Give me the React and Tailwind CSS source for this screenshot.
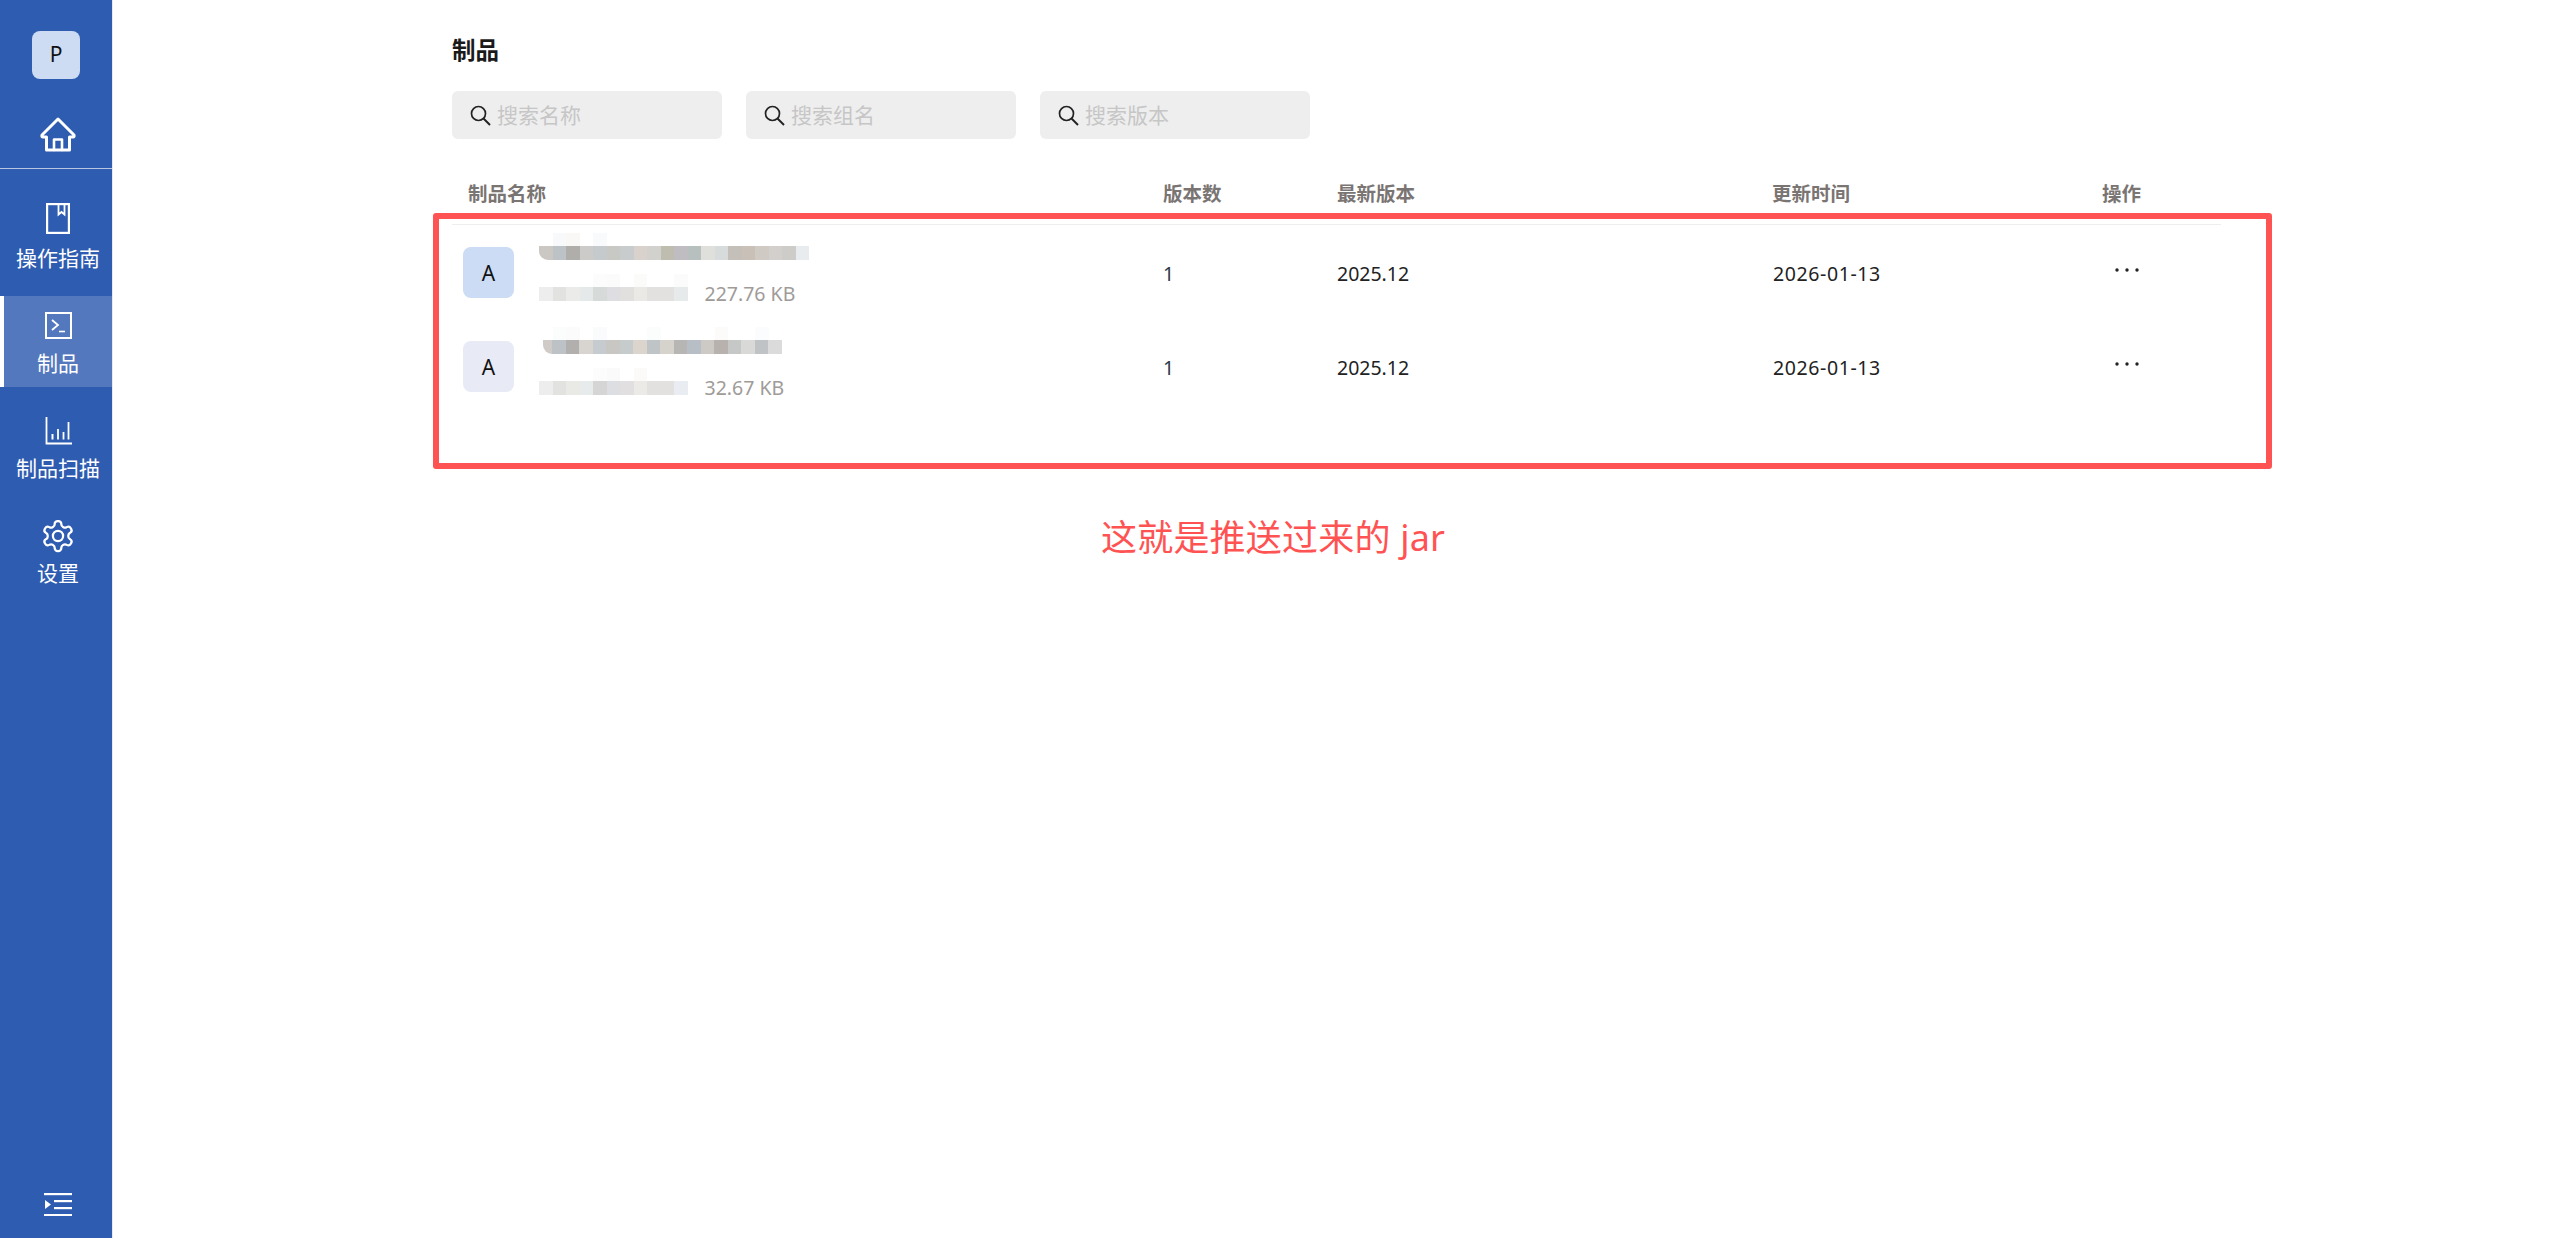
const font = "font-['Noto_Sans','Noto_Sans_CJK_SC',sans-serif]";

function Mosaic({ cells, first = "w-[13.5px]", rounded = "" }) {
  return (
    <div className={`flex h-[14px] ${rounded}`}>
      {cells.map((c, i) => (
        <div key={i} className={i === 0 ? `${first} h-full shrink-0 ${rounded ? "rounded-bl-[9px]" : ""}` : "w-[13.5px] h-full shrink-0"} style={{ backgroundColor: c }} />
      ))}
    </div>
  );
}

function Faint({ cells, className = "" }) {
  return (
    <div className={`flex h-[13px] ${className}`}>
      {cells.map((c, i) => (
        <div key={i} className="w-[13.5px] h-full shrink-0" style={{ backgroundColor: c }} />
      ))}
    </div>
  );
}

const W = "#ffffff";
const rows = [
  {
    avatar: "bg-[#cbdcf4]",
    size: "227.76 KB",
    indent: "",
    first: "w-[13.5px]",
    faint: [W, "#f8f9fb", "#faf8f6", W, "#f9fafc", W],
    name: ["#cbc7c3", "#bcc2c5", "#b0aeab", "#cdcbca", "#c5cacc", "#c8c8c5", "#c8cccd", "#d9d2cc", "#d2d1ce", "#bfbcb0", "#bfbdc2", "#b7bfbf", "#dfdfdc", "#d8dbdc", "#c4c0b9", "#c9c0b8", "#cfcbc4", "#d2cfcc", "#cdccc8", "#e8ecee"],
    faintSub: [W, W, W, W, "#fcfcfc", "#fbfbfb", W, "#fbfbf9", W, W, "#fbfbfb"],
    sub: ["#ededed", "#e2e2e1", "#ebebe9", "#e6e9ea", "#d6dbd9", "#dddde2", "#e2dfdf", "#eae9e5", "#e2e1e0", "#e2e1df", "#e7eaeb"],
  },
  {
    avatar: "bg-[#e8eaf6]",
    size: "32.67 KB",
    indent: "ml-[4px]",
    first: "w-[9px]",
    faint: [W, "#fbfcfc", "#fbfbfb", W, "#fafbfd", W, W, W, "#fbfdfd", W, W, W, W, "#fcfbf9", W, W, "#fbfcfe", W],
    name: ["#d0cbc6", "#bcc2c5", "#b2b0af", "#d8d4d0", "#c5cbce", "#c8c7c3", "#c6cbcc", "#dcd5ce", "#bfc5c7", "#d6d2cc", "#b8b5b5", "#b8bec5", "#cdc9c4", "#b7b2ae", "#c6c7c7", "#d9dad8", "#c0c3c5", "#dbdbdb"],
    faintSub: [W, W, W, W, "#fcfcfc", "#fafafa", W, "#fbfaf8", W, W, W],
    sub: ["#ededed", "#e2e2e1", "#e9e9e6", "#e8ebeb", "#d5d5d5", "#dddee2", "#e2dfe1", "#eceae6", "#e2e1e0", "#e2e1df", "#e9ecf0"],
  },
];

const Home = () => (
  <svg width="36" height="35" viewBox="0 0 36 35" fill="none" stroke="white" strokeWidth="3" strokeLinejoin="round" strokeLinecap="round">
    <path d="M18 2 L34 18 Q34.5 20 33 20 H29.5 V33 H6.5 V20 H3 Q1.5 20 2 18 Z" />
    <path d="M14 33 V22.5 H22 V33" strokeWidth="2.6" />
  </svg>
);
const Book = () => (
  <svg width="24" height="31" viewBox="0 0 24 31" fill="none" stroke="white" strokeWidth="2.2">
    <rect x="1.1" y="1.1" width="21.8" height="28.8" />
    <path d="M12.5 1 V11.5 L15.5 9 L18.5 11.5 V1" strokeWidth="1.8" />
  </svg>
);
const Terminal = () => (
  <svg width="27" height="27" viewBox="0 0 27 27" fill="none" stroke="white">
    <rect x="1" y="1" width="25" height="25" strokeWidth="2" />
    <path d="M7 8 L13 13 L7 18" strokeWidth="1.8" />
    <path d="M14 19.5 H20" strokeWidth="1.6" />
  </svg>
);
const Chart = () => (
  <svg width="27" height="28" viewBox="0 0 27 28" fill="none" stroke="white" strokeWidth="1.8">
    <path d="M1.5 0 V26.5 H27" />
    <path d="M7.5 17 V22.5" strokeWidth="2" />
    <path d="M13 12 V22.5" />
    <path d="M18.5 15 V22.5" />
    <path d="M23.5 5 V22.5" />
  </svg>
);
const Gear = () => (
  <svg width="36" height="36" viewBox="0 0 24 24" fill="none" stroke="white" strokeWidth="1.5" strokeLinejoin="round">
    <path d="M12.22 2h-.44a2 2 0 0 0-2 2v.18a2 2 0 0 1-1 1.73l-.43.25a2 2 0 0 1-2 0l-.15-.08a2 2 0 0 0-2.73.73l-.22.38a2 2 0 0 0 .73 2.73l.15.1a2 2 0 0 1 1 1.72v.51a2 2 0 0 1-1 1.74l-.15.09a2 2 0 0 0-.73 2.73l.22.38a2 2 0 0 0 2.73.73l.15-.08a2 2 0 0 1 2 0l.43.25a2 2 0 0 1 1 1.73V20a2 2 0 0 0 2 2h.44a2 2 0 0 0 2-2v-.18a2 2 0 0 1 1-1.73l.43-.25a2 2 0 0 1 2 0l.15.08a2 2 0 0 0 2.73-.73l.22-.39a2 2 0 0 0-.73-2.73l-.15-.08a2 2 0 0 1-1-1.74v-.5a2 2 0 0 1 1-1.74l.15-.09a2 2 0 0 0 .73-2.73l-.22-.38a2 2 0 0 0-2.73-.73l-.15.08a2 2 0 0 1-2 0l-.43-.25a2 2 0 0 1-1-1.73V4a2 2 0 0 0-2-2z" />
    <circle cx="12" cy="12" r="3.4" />
  </svg>
);
const Collapse = () => (
  <svg width="28" height="23" viewBox="0 0 28 23" fill="white">
    <rect x="0" y="0" width="28" height="2.2" />
    <rect x="10" y="7" width="18" height="2.2" />
    <rect x="10" y="14" width="18" height="2.2" />
    <rect x="0" y="21" width="28" height="2.2" />
    <path d="M1 7 L7 11.6 L1 16 Z" />
  </svg>
);
const Search = () => (
  <svg width="21" height="21" viewBox="0 0 21 21" fill="none" stroke="#222222" strokeWidth="1.7" className="shrink-0">
    <circle cx="8.5" cy="8.5" r="7" />
    <path d="M13.5 13.5 L20 20" strokeWidth="2" />
  </svg>
);
const Dots = () => (
  <svg width="26" height="6" viewBox="0 0 26 6" fill="#222222">
    <circle cx="3" cy="3" r="1.7" />
    <circle cx="13" cy="3" r="1.7" />
    <circle cx="23" cy="3" r="1.7" />
  </svg>
);

function NavItem({ icon, label, active, top, gap }) {
  return (
    <div className={`relative h-[91px] flex flex-col items-center justify-start pl-[4px] ${top} ${active ? "bg-[#5478bd]" : ""}`}>
      {active && <div className="absolute left-0 top-0 bottom-0 w-[4px] bg-white" />}
      <div className="h-[36px] flex items-center justify-center">{icon}</div>
      <div className={`text-[21px] leading-[28px] text-white whitespace-nowrap ${gap}`}>{label}</div>
    </div>
  );
}

function SearchBox({ label }) {
  return (
    <div className="w-[270px] h-[48px] rounded-[6px] bg-[#eeeeee] flex items-center pl-[18px] gap-[6px]">
      <Search />
      <span className="text-[21px] text-[#c6c6c6] leading-none">{label}</span>
    </div>
  );
}

export default function App() {
  return (
    <div className={`${font} relative flex h-[1238px] w-[2559px] bg-white overflow-hidden`}>
      <aside className="w-[113px] shrink-0 h-full bg-[#2e5cb0] border-r border-[#e8e8e8] flex flex-col">
        <div className="h-[169px] border-b border-[#b9c6df] flex flex-col items-center shrink-0">
          <div className="mt-[31px] w-[48px] h-[48px] rounded-[8px] bg-[#cddcf3] flex items-center justify-center text-[21px] text-[#111111]">P</div>
          <div className="mt-[38px] pl-[4px]"><Home /></div>
        </div>
        <div className="flex flex-col gap-[14px] pt-[22px]">
          <NavItem icon={<Book />} label="操作指南" top="pt-[9px]" gap="mt-[8px]" />
          <NavItem icon={<Terminal />} label="制品" active top="pt-[11px]" gap="mt-[6px]" />
          <NavItem icon={<Chart />} label="制品扫描" top="pt-[12px]" gap="mt-[5px]" />
          <NavItem icon={<Gear />} label="设置" top="pt-[12px]" gap="mt-[5px]" />
        </div>
        <div className="mt-auto mb-[22px] pl-[4px] flex justify-center"><Collapse /></div>
      </aside>

      <main className="pl-[339px] w-[2108px] shrink-0">
        <h1 className="text-[23.5px] font-bold text-[#1a1a1a] leading-[32px] mt-[34px]">制品</h1>
        <div className="flex gap-[24px] mt-[25px]">
          <SearchBox label="搜索名称" />
          <SearchBox label="搜索组名" />
          <SearchBox label="搜索版本" />
        </div>
        <div className="grid grid-cols-[711px_174px_435px_330px_119px] h-[86px] items-end border-b border-[#eeeeee] pb-[17px] text-[19.5px] font-bold text-[#7a7573] leading-[26px]">
          <div className="pl-[16px]">制品名称</div>
          <div>版本数</div>
          <div>最新版本</div>
          <div>更新时间</div>
          <div>操作</div>
        </div>
        {rows.map((r) => (
          <div key={r.size} className="grid grid-cols-[711px_174px_435px_330px_119px] h-[94px] text-[19.5px] leading-[26px] text-[#222222]">
            <div className="flex items-start pl-[11px] gap-[25px]">
              <div className={`mt-[22px] w-[51px] h-[51px] rounded-[8px] flex items-center justify-center text-[21px] text-[#111111] ${r.avatar}`}>A</div>
              <div className="mt-[8px] flex flex-col">
                <Faint cells={r.faint} />
                <div className={r.indent}><Mosaic cells={r.name} first={r.first} rounded="overflow-hidden" /></div>
                <Faint cells={r.faintSub} className="mt-[14px]" />
                <div className="flex items-center h-[13px]">
                  <Mosaic cells={r.sub} />
                  <span className="ml-[17px] text-[#a09b98] whitespace-nowrap">{r.size}</span>
                </div>
              </div>
            </div>
            <div className="mt-[36px] text-[#2a3a4a]">1</div>
            <div className="mt-[36px]">2025.12</div>
            <div className="mt-[36px] pl-[1px] tracking-[0.6px]">2026-01-13</div>
            <div className="mt-[42px] pl-[12px]"><Dots /></div>
          </div>
        ))}
      </main>

      <div className="absolute left-[433px] top-[213px] w-[1839px] h-[256px] border-[6px] border-[#ff5252] rounded-[3px]" />
      <div className="absolute left-[1101px] top-[512px] text-[36px] leading-[52px] tracking-[0.2px] text-[#ff5252] whitespace-nowrap">这就是推送过来的 jar</div>
    </div>
  );
}
